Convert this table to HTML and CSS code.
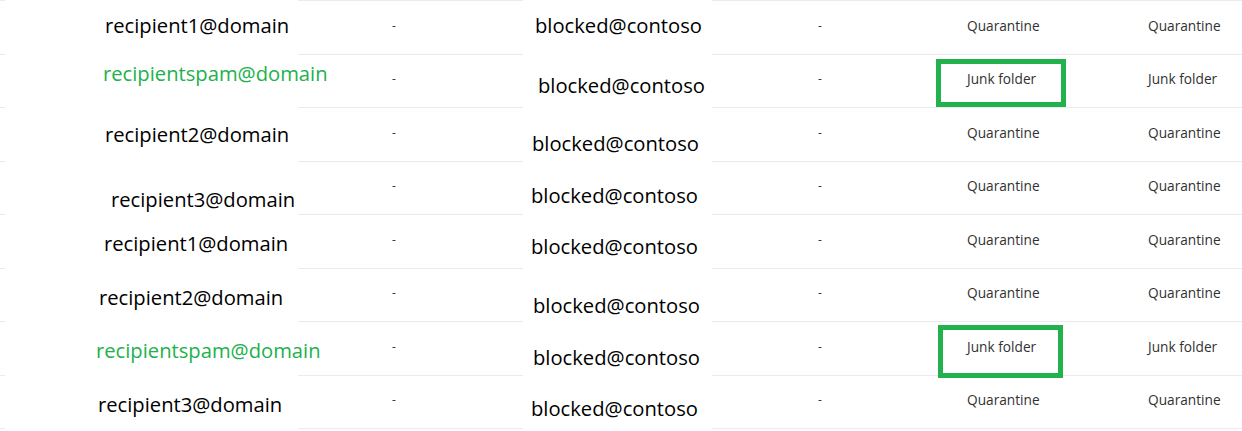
FILE: index.html
```html
<!DOCTYPE html>
<html>
<head>
<meta charset="utf-8">
<link rel="stylesheet" href="styles.css">
</head>
<body>
<div class="table">
  <!-- row 1 -->
  <div class="edge"></div>
  <div class="patch rcp r1"><span>recipient1@domain</span></div>
  <div class="cell dashcell"><span class="dash">-</span></div>
  <div class="patch blk b1"><span>blocked@contoso</span></div>
  <div class="cell dashcell2"><span class="dash">-</span></div>
  <div class="cell status"><span>Quarantine</span></div>
  <div class="cell status last"><span>Quarantine</span></div>
  <!-- row 2 -->
  <div class="edge"></div>
  <div class="patch rcp r2 spam"><span>recipientspam@domain</span></div>
  <div class="cell dashcell"><span class="dash">-</span></div>
  <div class="patch blk b2"><span>blocked@contoso</span></div>
  <div class="cell dashcell2"><span class="dash">-</span></div>
  <div class="cell status"><span>Junk folder</span><i class="mark mark1"></i></div>
  <div class="cell status last"><span>Junk folder</span></div>
  <!-- row 3 -->
  <div class="edge"></div>
  <div class="patch rcp r3"><span>recipient2@domain</span></div>
  <div class="cell dashcell"><span class="dash">-</span></div>
  <div class="patch blk b3"><span>blocked@contoso</span></div>
  <div class="cell dashcell2"><span class="dash">-</span></div>
  <div class="cell status"><span>Quarantine</span></div>
  <div class="cell status last"><span>Quarantine</span></div>
  <!-- row 4 -->
  <div class="edge"></div>
  <div class="patch rcp r4"><span>recipient3@domain</span></div>
  <div class="cell dashcell"><span class="dash">-</span></div>
  <div class="patch blk b4"><span>blocked@contoso</span></div>
  <div class="cell dashcell2"><span class="dash">-</span></div>
  <div class="cell status"><span>Quarantine</span></div>
  <div class="cell status last"><span>Quarantine</span></div>
  <!-- row 5 -->
  <div class="edge"></div>
  <div class="patch rcp r5"><span>recipient1@domain</span></div>
  <div class="cell dashcell"><span class="dash">-</span></div>
  <div class="patch blk b5"><span>blocked@contoso</span></div>
  <div class="cell dashcell2"><span class="dash">-</span></div>
  <div class="cell status"><span>Quarantine</span></div>
  <div class="cell status last"><span>Quarantine</span></div>
  <!-- row 6 -->
  <div class="edge"></div>
  <div class="patch rcp r6"><span>recipient2@domain</span></div>
  <div class="cell dashcell"><span class="dash">-</span></div>
  <div class="patch blk b6"><span>blocked@contoso</span></div>
  <div class="cell dashcell2"><span class="dash">-</span></div>
  <div class="cell status"><span>Quarantine</span></div>
  <div class="cell status last"><span>Quarantine</span></div>
  <!-- row 7 -->
  <div class="edge"></div>
  <div class="patch rcp r7 spam"><span>recipientspam@domain</span></div>
  <div class="cell dashcell"><span class="dash">-</span></div>
  <div class="patch blk b7"><span>blocked@contoso</span></div>
  <div class="cell dashcell2"><span class="dash">-</span></div>
  <div class="cell status"><span>Junk folder</span><i class="mark mark2"></i></div>
  <div class="cell status last"><span>Junk folder</span></div>
  <!-- row 8 -->
  <div class="edge lastrow"></div>
  <div class="patch rcp r8"><span>recipient3@domain</span></div>
  <div class="cell dashcell lastrow"><span class="dash">-</span></div>
  <div class="patch blk b8"><span>blocked@contoso</span></div>
  <div class="cell dashcell2 lastrow"><span class="dash">-</span></div>
  <div class="cell status lastrow"><span>Quarantine</span></div>
  <div class="cell status last lastrow"><span>Quarantine</span></div>
</div>
</body>
</html>
```
FILE: styles.css
```css
html, body {
  margin: 0;
  padding: 0;
  background: #ffffff;
}
body {
  width: 1242px;
  height: 431px;
  overflow: hidden;
}
.table {
  display: grid;
  grid-template-columns: 5px 293px 225px 189px 216px 150px 164px;
  grid-template-rows: repeat(4, 54px 53px);
}
.edge, .cell {
  border-top: 1px solid #ebebeb;
  box-sizing: border-box;
}
.lastrow {
  border-bottom: 1px solid #ebebeb;
  margin-bottom: -1px;
}
.patch {
  background: #ffffff;
  position: relative;
  z-index: 1;
  font-family: "Open Sans", "Noto Sans", sans-serif;
  font-size: 20.2px;
  line-height: 24px;
  color: #000000;
  white-space: nowrap;
}
.patch span {
  display: block;
}
.spam {
  color: #22b14c;
}
.cell {
  display: flex;
  align-items: center;
  padding-bottom: 5px;
  font-family: "Open Sans", "Noto Sans", sans-serif;
  font-size: 13.7px;
  color: #323130;
  white-space: nowrap;
  position: relative;
}
.dashcell {
  padding-left: 94px;
}
.dashcell2 {
  padding-left: 106px;
}
.dash {
  font-size: 12px;
}
.status {
  padding-left: 39px;
}
.status.last {
  padding-left: 70px;
}
.mark {
  position: absolute;
  z-index: 2;
  border: 5px solid #22b14c;
  box-sizing: border-box;
}
.mark1 {
  left: 8px;
  top: 4px;
  width: 130px;
  height: 48px;
}
.mark2 {
  left: 10px;
  top: 3px;
  width: 125px;
  height: 53px;
}
/* recipient text offsets */
.r1 span { padding: 13px 0 0 100px; }
.r2 span { padding: 7px 0 0 98px; }
.r3 span { padding: 15px 0 0 100px; }
.r4 span { padding: 26px 0 0 106px; }
.r5 span { padding: 17px 0 0 99px; }
.r6 span { padding: 17px 0 0 94px; }
.r7 span { padding: 17px 0 0 91px; }
.r8 span { padding: 17px 0 0 93px; }
/* blocked text offsets */
.b1 span { padding: 13px 0 0 12px; }
.b2 span { padding: 19px 0 0 15px; }
.b3 span { padding: 24px 0 0 9px; }
.b4 span { padding: 22px 0 0 8px; }
.b5 span { padding: 20px 0 0 8px; }
.b6 span { padding: 25px 0 0 10px; }
.b7 span { padding: 24px 0 0 10px; }
.b8 span { padding: 21px 0 0 8px; }
```
